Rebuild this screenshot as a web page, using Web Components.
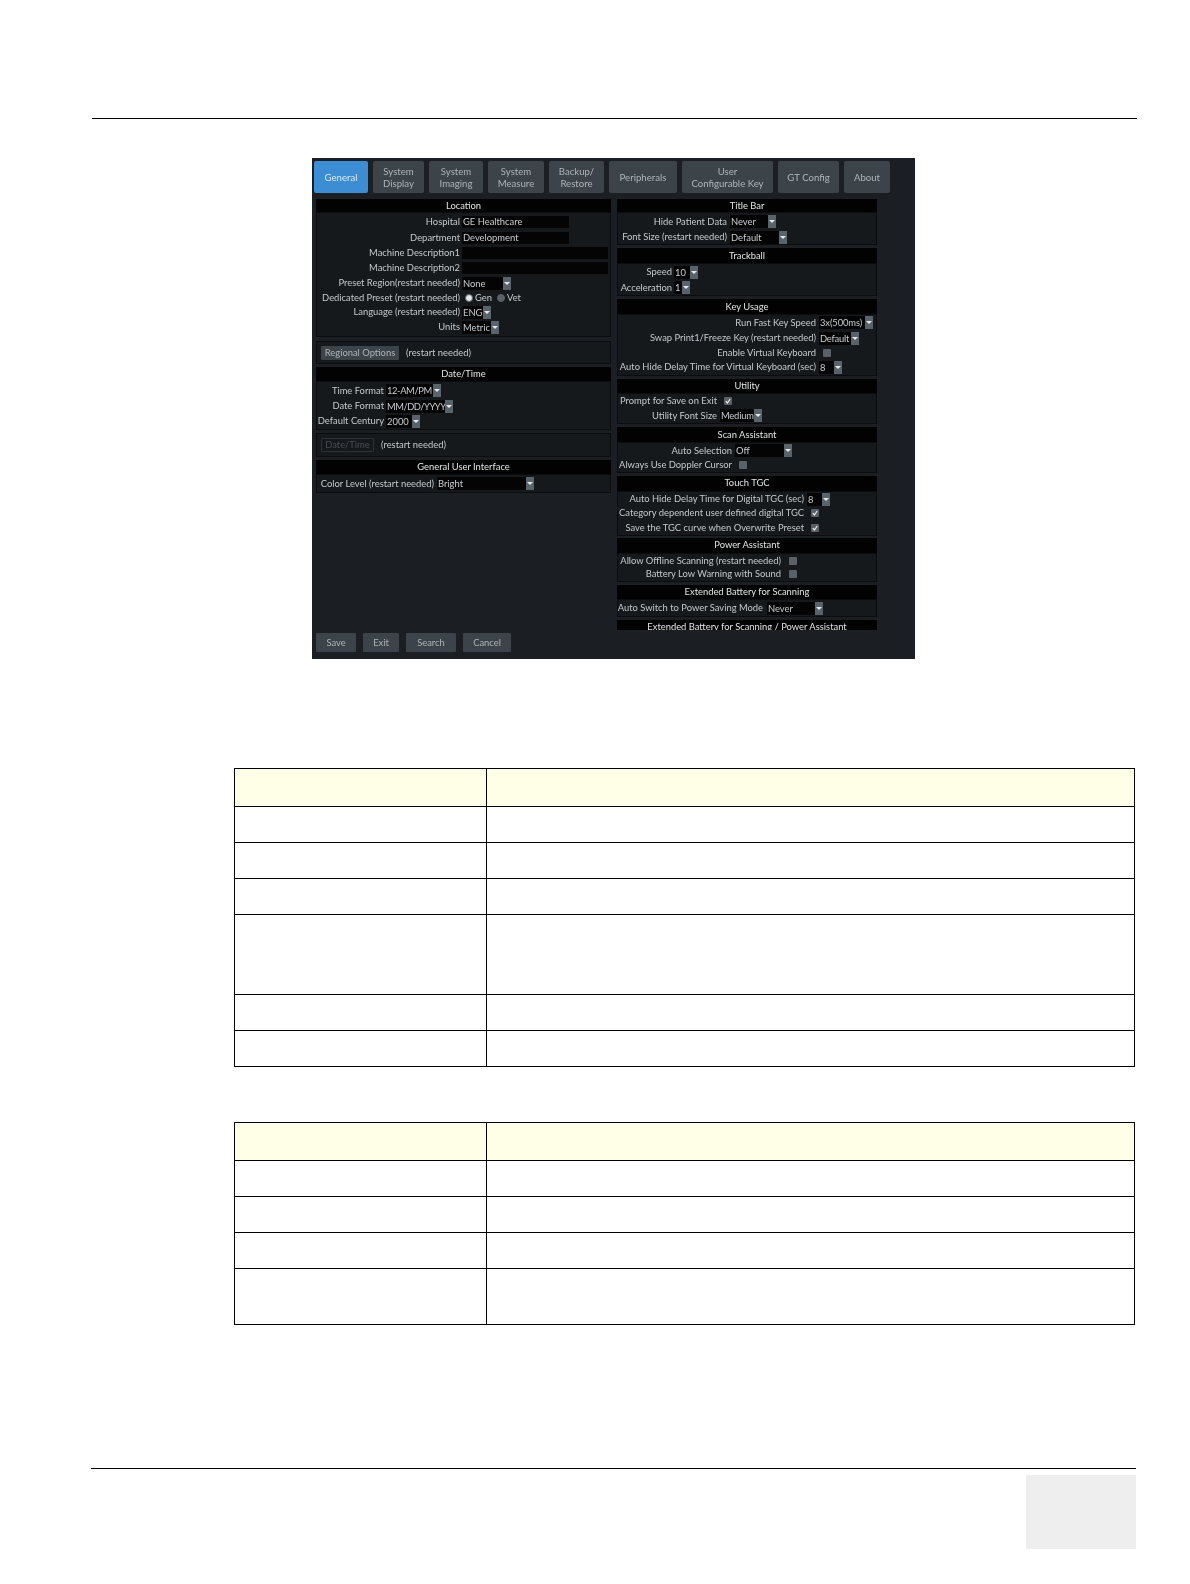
<!DOCTYPE html>
<html lang="en">
<head>
<meta charset="utf-8">
<title>General preset</title>
<style>
  body { margin: 0; background: #fff; font-family: Lato, "Liberation Sans", sans-serif; }
</style>
</head>
<body>
<doc-page>
  <doc-rule slot="top"></doc-rule>
  <setup-panel slot="shot">
    <setup-tab slot="tabs" w="54" active>General</setup-tab>
    <setup-tab slot="tabs" w="51">System<br>Display</setup-tab>
    <setup-tab slot="tabs" w="54">System<br>Imaging</setup-tab>
    <setup-tab slot="tabs" w="56">System<br>Measure</setup-tab>
    <setup-tab slot="tabs" w="55">Backup/<br>Restore</setup-tab>
    <setup-tab slot="tabs" w="68">Peripherals</setup-tab>
    <setup-tab slot="tabs" w="91">User<br>Configurable Key</setup-tab>
    <setup-tab slot="tabs" w="61">GT Config</setup-tab>
    <setup-tab slot="tabs" w="46">About</setup-tab>

    <setup-group slot="left" title="Location" hh="13" lh="13">
      <setup-row style="margin-top:1px" h="16" lw="143" gap="2" label="Hospital"><setup-input w="107">GE Healthcare</setup-input></setup-row>
      <setup-row h="15" lw="143" gap="2" label="Department"><setup-input w="107">Development</setup-input></setup-row>
      <setup-row h="16" lw="143" gap="2" label="Machine Description1"><setup-input w="146"></setup-input></setup-row>
      <setup-row h="14" lw="143" gap="2" label="Machine Description2"><setup-input w="146"></setup-input></setup-row>
      <setup-row h="16" lw="143" gap="2" label="Preset Region(restart needed)"><setup-select w="41">None</setup-select></setup-row>
      <setup-row h="14" lw="143" gap="2" label="Dedicated Preset (restart needed)"><setup-radio checked>Gen</setup-radio><setup-radio>Vet</setup-radio></setup-row>
      <setup-row h="14" lw="143" gap="2" label="Language (restart needed)"><setup-select w="21">ENG</setup-select></setup-row>
      <setup-row style="margin-bottom:1px" h="16" lw="143" gap="2" label="Units"><setup-select w="29">Metric</setup-select></setup-row>
    </setup-group>
    <setup-note slot="left" style="margin-top:1px;height:23px"><setup-button w="78" h="14">Regional Options</setup-button>(restart needed)</setup-note>
    <setup-group slot="left" title="Date/Time" hh="14">
      <setup-row h="17" lw="67" gap="2" label="Time Format"><setup-select w="47" style="letter-spacing:-.4px">12-AM/PM</setup-select></setup-row>
      <setup-row h="14" lw="67" gap="2" label="Date Format"><setup-select w="59" style="letter-spacing:-.5px">MM/DD/YYYY</setup-select></setup-row>
      <setup-row h="16" lw="67" gap="2" label="Default Century"><setup-select w="26">2000</setup-select></setup-row>
    </setup-group>
    <setup-note slot="left" style="height:24px"><setup-button w="53" h="14" disabled>Date/Time</setup-button>(restart needed)</setup-note>
    <setup-group slot="left" title="General User Interface" hh="14">
      <setup-row h="17" lw="117" gap="3" label="Color Level (restart needed)"><setup-select w="89">Bright</setup-select></setup-row>
    </setup-group>
    <setup-actions slot="left">
      <setup-button w="40" h="19">Save</setup-button>
      <setup-button w="36" h="19">Exit</setup-button>
      <setup-button w="50" h="19">Search</setup-button>
      <setup-button w="48" h="19">Cancel</setup-button>
    </setup-actions>

    <setup-group slot="right" title="Title Bar" hh="13" lh="13">
      <setup-row h="17" lw="109" gap="3" label="Hide Patient Data"><setup-select w="38">Never</setup-select></setup-row>
      <setup-row h="14" lw="109" gap="3" label="Font Size (restart needed)"><setup-select w="49">Default</setup-select></setup-row>
    </setup-group>
    <setup-group slot="right" title="Trackball" hh="15" lh="15">
      <setup-row h="16" lw="54" gap="2" label="Speed"><setup-select w="16">10</setup-select></setup-row>
      <setup-row h="15" lw="54" gap="2" label="Acceleration"><setup-select w="8">1</setup-select></setup-row>
    </setup-group>
    <setup-group slot="right" title="Key Usage" hh="15" lh="15">
      <setup-row h="15" lw="198" gap="3" label="Run Fast Key Speed"><setup-select w="46" style="letter-spacing:-.1px">3x(500ms)</setup-select></setup-row>
      <setup-row h="16" lw="198" gap="3" label="Swap Print1/Freeze Key (restart needed)"><setup-select w="32" style="letter-spacing:-.2px">Default</setup-select></setup-row>
      <setup-row h="13" lw="198" gap="7" label="Enable Virtual Keyboard"><setup-check></setup-check></setup-row>
      <setup-row h="16" lw="198" gap="3" label="Auto Hide Delay Time for Virtual Keyboard (sec)"><setup-select w="15">8</setup-select></setup-row>
    </setup-group>
    <setup-group slot="right" title="Utility" hh="14">
      <setup-row h="14" lw="99" gap="7" label="Prompt for Save on Exit"><setup-check checked></setup-check></setup-row>
      <setup-row h="15" lw="99" gap="3" label="Utility Font Size"><setup-select w="34" style="letter-spacing:-.2px">Medium</setup-select></setup-row>
    </setup-group>
    <setup-group slot="right" title="Scan Assistant" hh="15" lh="15">
      <setup-row h="15" lw="114" gap="3" label="Auto Selection"><setup-select w="49">Off</setup-select></setup-row>
      <setup-row h="14" lw="114" gap="7" label="Always Use Doppler Cursor"><setup-check></setup-check></setup-row>
    </setup-group>
    <setup-group slot="right" title="Touch TGC" hh="15">
      <setup-row h="14" lw="186" gap="3" label="Auto Hide Delay Time for Digital TGC (sec)"><setup-select w="15">8</setup-select></setup-row>
      <setup-row h="14" lw="186" gap="7" label="Category dependent user defined digital TGC"><setup-check checked></setup-check></setup-row>
      <setup-row h="15" lw="186" gap="7" label="Save the TGC curve when Overwrite Preset"><setup-check checked></setup-check></setup-row>
    </setup-group>
    <setup-group slot="right" title="Power Assistant" hh="15" style="margin-top:-1px">
      <setup-row h="13" lw="163" gap="8" label="Allow Offline Scanning (restart needed)"><setup-check></setup-check></setup-row>
      <setup-row h="14" lw="163" gap="8" label="Battery Low Warning with Sound"><setup-check></setup-check></setup-row>
    </setup-group>
    <setup-group slot="right" title="Extended Battery for Scanning" hh="14">
      <setup-row h="16" lw="145" gap="4" label="Auto Switch to Power Saving Mode"><setup-select w="48">Never</setup-select></setup-row>
    </setup-group>
    <setup-group slot="right" title="Extended Battery for Scanning / Power Assistant" hh="14" cut="10"></setup-group>
  </setup-panel>
  <spec-table slot="tables" rows="38,36,36,36,80,36,36" style="margin-top:109px"></spec-table>
  <spec-table slot="tables" rows="38,36,36,36,56" style="margin-top:55px"></spec-table>
  <doc-footer slot="bottom"></doc-footer>
</doc-page>

<script>
class DocPage extends HTMLElement {
    constructor() {
        super();
        this.attachShadow({ mode: 'open' });
        this.shadowRoot.innerHTML = `
        <style>
            :host { display: flex; flex-direction: column; width: 1190px; height: 1584px; overflow: hidden; }
            .top { display: block; margin: 118px 0 0 92px; }
            .shot { display: block; margin: 39px 0 0 312px; }
            .tables { display: flex; flex-direction: column; margin-left: 234px; }
            .bottom { display: block; margin: auto 0 35px 91px; }
        </style>
        <div class="top"><slot name="top"></slot></div>
        <div class="shot"><slot name="shot"></slot></div>
        <div class="tables"><slot name="tables"></slot></div>
        <div class="bottom"><slot name="bottom"></slot></div>`;
    }
}

class DocRule extends HTMLElement {
    constructor() {
        super();
        this.attachShadow({ mode: 'open' });
        this.shadowRoot.innerHTML = `
        <style>:host { display: block; width: 1045px; height: 1px; background: #000; }</style>`;
    }
}

class DocFooter extends HTMLElement {
    constructor() {
        super();
        this.attachShadow({ mode: 'open' });
        this.shadowRoot.innerHTML = `
        <style>
            :host { display: flex; flex-direction: column; align-items: flex-end; width: 1045px; }
            .line { width: 100%; height: 1px; background: #000; }
            .box { width: 110px; height: 74px; margin-top: 6px; background: #eee; }
        </style>
        <div class="line"></div>
        <div class="box"></div>`;
    }
}

class SetupPanel extends HTMLElement {
    constructor() {
        super();
        this.attachShadow({ mode: 'open' });
        this.shadowRoot.innerHTML = `
        <style>
            :host {
                display: flex; flex-direction: column; box-sizing: border-box;
                width: 603px; height: 501px; padding: 3px 0 7px 2px;
                background: #1b1f23; color: #c4c9cc;
                font: 9.4px/12px Lato, "Liberation Sans", sans-serif;
                filter: blur(.3px);
            }
            .tabs { display: flex; gap: 5px; height: 32px; flex: none; }
            .cols { display: grid; grid-template-columns: 295px 260px; column-gap: 6px; flex: 1; min-height: 0; margin: 6px 0 0 2px; }
            .col { display: flex; flex-direction: column; gap: 3px; min-height: 0; }
        </style>
        <div class="tabs"><slot name="tabs"></slot></div>
        <div class="cols">
            <div class="col"><slot name="left"></slot></div>
            <div class="col"><slot name="right"></slot></div>
        </div>`;
    }
}

class SetupTab extends HTMLElement {
    constructor() {
        super();
        this.attachShadow({ mode: 'open' });
        this.shadowRoot.innerHTML = `
        <style>
            :host {
                display: flex; align-items: center; justify-content: center; text-align: center;
                box-sizing: border-box; padding-top: 2px;
                height: 32px; border-radius: 2px; background: #3c444a; color: #aeb4b8;
                font-size: 9.6px;
            }
            :host([active]) { background: #3c8dd3; color: #dfe9f0; }
        </style>
        <slot></slot>`;
    }
    connectedCallback() {
        this.style.width = this.getAttribute('w') + 'px';
    }
}

class SetupGroup extends HTMLElement {
    constructor() {
        super();
        this.attachShadow({ mode: 'open' });
    }
    connectedCallback() {
        const hh = this.getAttribute('hh');
        const lh = this.getAttribute('lh') || hh - 1;
        const cut = this.getAttribute('cut');
        const body = this.childElementCount ? '<div class="body"><slot></slot></div>' : '';
        this.shadowRoot.innerHTML = `
        <style>
            :host { display: block; flex: none; overflow: hidden; ${cut ? 'height:' + cut + 'px;' : ''} }
            header { height: ${hh}px; line-height: ${lh}px; background: #020202; color: #e2e4e5; text-align: center; }
            .body { border: 1px solid #0a0c0e; background: #15191c; }
        </style>
        <header>${this.getAttribute('title')}</header>
        ${body}`;
        this.removeAttribute('title');
    }
}

class SetupRow extends HTMLElement {
    constructor() {
        super();
        this.attachShadow({ mode: 'open' });
    }
    connectedCallback() {
        const lw = this.getAttribute('lw');
        const gap = this.getAttribute('gap');
        this.shadowRoot.innerHTML = `
        <style>
            :host { display: flex; align-items: center; height: ${this.getAttribute('h')}px; }
            label { display: flex; justify-content: flex-end; flex: none; width: ${lw}px; margin-right: ${gap}px; white-space: nowrap; }
            .ctl { display: flex; align-items: center; }
        </style>
        <label><span>${this.getAttribute('label')}</span></label>
        <div class="ctl"><slot></slot></div>`;
    }
}

class SetupInput extends HTMLElement {
    constructor() {
        super();
        this.attachShadow({ mode: 'open' });
        this.shadowRoot.innerHTML = `
        <style>
            :host { display: block; box-sizing: border-box; height: 12px; padding-left: 1px; background: #040404; color: #c8cccf; white-space: nowrap; }
        </style>
        <slot></slot>`;
    }
    connectedCallback() {
        this.style.width = this.getAttribute('w') + 'px';
    }
}

class SetupSelect extends HTMLElement {
    constructor() {
        super();
        this.attachShadow({ mode: 'open' });
        this.shadowRoot.innerHTML = `
        <style>
            :host { display: flex; height: 13px; }
            .val { box-sizing: border-box; padding-left: 1px; background: #040404; color: #c8cccf; white-space: nowrap; overflow: hidden; line-height: 13px; }
            .arrow { display: flex; align-items: center; justify-content: center; width: 8px; background: #59636b; }
            svg { display: block; }
        </style>
        <div class="val"><slot></slot></div>
        <div class="arrow"><svg width="6" height="3" viewBox="0 0 6 3"><path d="M0 0h6L3 3z" fill="#e6e8ea"/></svg></div>`;
    }
    connectedCallback() {
        this.shadowRoot.querySelector('.val').style.width = this.getAttribute('w') + 'px';
    }
}

class SetupCheck extends HTMLElement {
    constructor() {
        super();
        this.attachShadow({ mode: 'open' });
    }
    connectedCallback() {
        const mark = this.hasAttribute('checked')
            ? '<svg width="8" height="8" viewBox="0 0 8 8"><path d="M1.8 4.2l1.6 1.8 2.8-4" fill="none" stroke="#eceef0" stroke-width="1.2"/></svg>'
            : '';
        this.shadowRoot.innerHTML = `
        <style>
            :host { display: block; width: 8px; height: 8px; border-radius: 1px; background: #596066; }
            svg { display: block; }
        </style>
        ${mark}`;
    }
}

class SetupRadio extends HTMLElement {
    constructor() {
        super();
        this.attachShadow({ mode: 'open' });
    }
    connectedCallback() {
        const dot = this.hasAttribute('checked') ? '#e4e6e8' : '#596066';
        this.shadowRoot.innerHTML = `
        <style>
            :host { display: flex; align-items: center; gap: 2px; margin-left: 3px; margin-right: 2px; }
            i { display: block; box-sizing: border-box; width: 8px; height: 8px; border-radius: 50%; background: ${dot}; border: 1.5px solid #596066; }
        </style>
        <i></i><slot></slot>`;
    }
}

class SetupButton extends HTMLElement {
    constructor() {
        super();
        this.attachShadow({ mode: 'open' });
    }
    connectedCallback() {
        this.shadowRoot.innerHTML = `
        <style>
            :host {
                display: flex; align-items: center; justify-content: center; flex: none;
                width: ${this.getAttribute('w')}px; height: ${this.getAttribute('h')}px;
                box-sizing: border-box; border-radius: 1px; background: #3c444a; color: #aeb4b8;
            }
            :host([disabled]) { background: transparent; border: 1px solid #2b3135; color: #474e53; }
        </style>
        <slot></slot>`;
    }
}

class SetupNote extends HTMLElement {
    constructor() {
        super();
        this.attachShadow({ mode: 'open' });
        this.shadowRoot.innerHTML = `
        <style>
            :host {
                display: flex; align-items: center; gap: 7px; flex: none; box-sizing: border-box;
                padding-left: 4px; border: 1px solid #0a0c0e; background: #15191c;
            }
        </style>
        <slot></slot>`;
    }
}

class SetupActions extends HTMLElement {
    constructor() {
        super();
        this.attachShadow({ mode: 'open' });
        this.shadowRoot.innerHTML = `
        <style>:host { display: flex; gap: 7px; flex: none; margin-top: auto; }</style>
        <slot></slot>`;
    }
}

class SpecTable extends HTMLElement {
    constructor() {
        super();
        this.attachShadow({ mode: 'open' });
    }
    connectedCallback() {
        const rows = this.getAttribute('rows').split(',').map((h, i) =>
            `<tr class="${i === 0 ? 'head' : ''}" style="height:${h}px"><td></td><td></td></tr>`).join('');
        this.shadowRoot.innerHTML = `
        <style>
            :host { display: block; width: 901px; }
            table { width: 100%; table-layout: fixed; border-collapse: collapse; }
            td { padding: 0; border: 1.3px solid #000; }
            td:first-child { width: 251px; }
            .head td { background: #feffe6; }
        </style>
        <table>${rows}</table>`;
    }
}

customElements.define('doc-page', DocPage);
customElements.define('doc-rule', DocRule);
customElements.define('doc-footer', DocFooter);
customElements.define('setup-panel', SetupPanel);
customElements.define('setup-tab', SetupTab);
customElements.define('setup-group', SetupGroup);
customElements.define('setup-row', SetupRow);
customElements.define('setup-input', SetupInput);
customElements.define('setup-select', SetupSelect);
customElements.define('setup-check', SetupCheck);
customElements.define('setup-radio', SetupRadio);
customElements.define('setup-button', SetupButton);
customElements.define('setup-note', SetupNote);
customElements.define('setup-actions', SetupActions);
customElements.define('spec-table', SpecTable);
</script>
</body>
</html>
